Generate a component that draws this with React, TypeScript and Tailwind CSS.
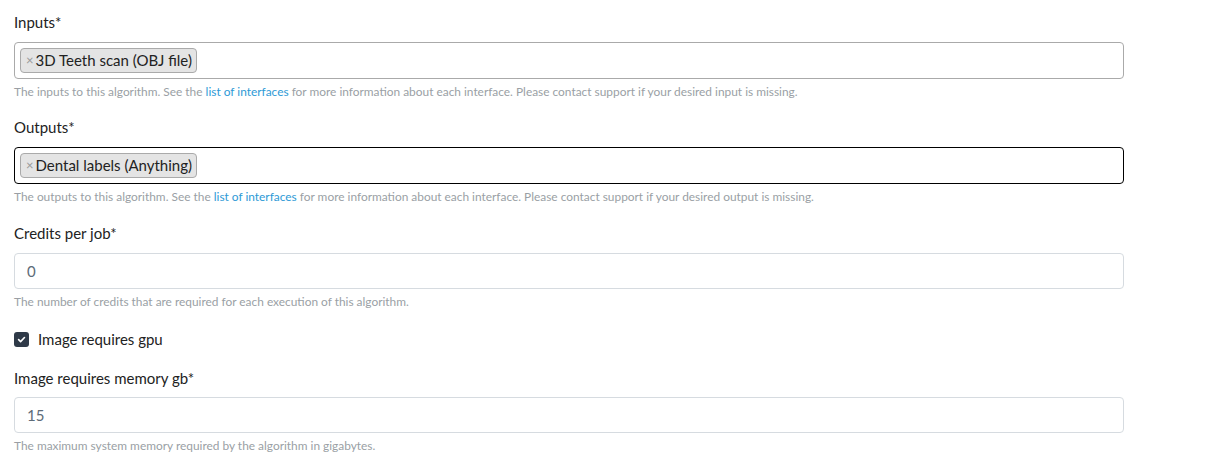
import React from 'react';

const Help = ({ children }: { children: React.ReactNode }) => (
  <p className="mt-1 text-[11.9px] leading-[18px] text-[#9a9fa5]">{children}</p>
);

const Tag = ({ label }: { label: string }) => (
  <span className="inline-flex h-[25px] items-center rounded-[4px] border border-[#aaaaaa] bg-[#e4e4e4] pl-[5px] pr-[4px] text-[15px] text-[#222]">
    <span className="mr-[2px] text-[13px] text-[#999]">×</span>
    {label}
  </span>
);

const App = () => {
  return (
    <div className="w-[1208px] h-[465px] bg-white px-[14px] pt-[11px] font-['Lato',sans-serif] text-[#222]">
      <div className="w-[1110px]">
        {/* Inputs */}
        <div className="mb-[15px]">
          <label className="block text-[15px] leading-[22px] mb-[9px]">Inputs*</label>
          <div className="flex h-[37px] items-center rounded-[4px] border border-[#aaaaaa] px-[5px]">
            <Tag label="3D Teeth scan (OBJ file)" />
          </div>
          <Help>
            The inputs to this algorithm. See the{' '}
            <a className="text-[#2e9ad6]">list of interfaces</a> for more information about each interface. Please contact support if your desired input is missing.
          </Help>
        </div>

        {/* Outputs */}
        <div className="mb-[16px]">
          <label className="block text-[15px] leading-[22px] mb-[9px]">Outputs*</label>
          <div className="flex h-[37px] items-center rounded-[4px] border border-black px-[5px]">
            <Tag label="Dental labels (Anything)" />
          </div>
          <Help>
            The outputs to this algorithm. See the{' '}
            <a className="text-[#2e9ad6]">list of interfaces</a> for more information about each interface. Please contact support if your desired output is missing.
          </Help>
        </div>

        {/* Credits */}
        <div className="mb-[17px]">
          <label className="block text-[15px] leading-[22px] mb-[9px]">Credits per job*</label>
          <input
            readOnly
            value="0"
            className="block h-[36px] w-full rounded-[4px] border border-[#d6dbe0] px-[12px] text-[15px] text-[#5d6b78] outline-none"
          />
          <Help>The number of credits that are required for each execution of this algorithm.</Help>
        </div>

        {/* GPU */}
        <div className="mb-[17px] flex h-[22px] items-center">
          <span className="flex h-[15px] w-[15px] items-center justify-center rounded-[3px] bg-[#2f3a48]">
            <svg width="9" height="9" viewBox="0 0 10 10" fill="none">
              <path d="M1.8 5.2 L4 7.3 L8.3 2.8" stroke="white" strokeWidth="1.8" strokeLinecap="round" strokeLinejoin="round" />
            </svg>
          </span>
          <span className="ml-[9px] text-[15px] leading-[22px]">Image requires gpu</span>
        </div>

        {/* Memory */}
        <div>
          <label className="block text-[15px] leading-[22px] mb-[8px]">Image requires memory gb*</label>
          <input
            readOnly
            value="15"
            className="block h-[36px] w-full rounded-[4px] border border-[#d6dbe0] px-[12px] text-[15px] text-[#5d6b78] outline-none"
          />
          <Help>The maximum system memory required by the algorithm in gigabytes.</Help>
        </div>
      </div>
    </div>
  );
};

export default App;
